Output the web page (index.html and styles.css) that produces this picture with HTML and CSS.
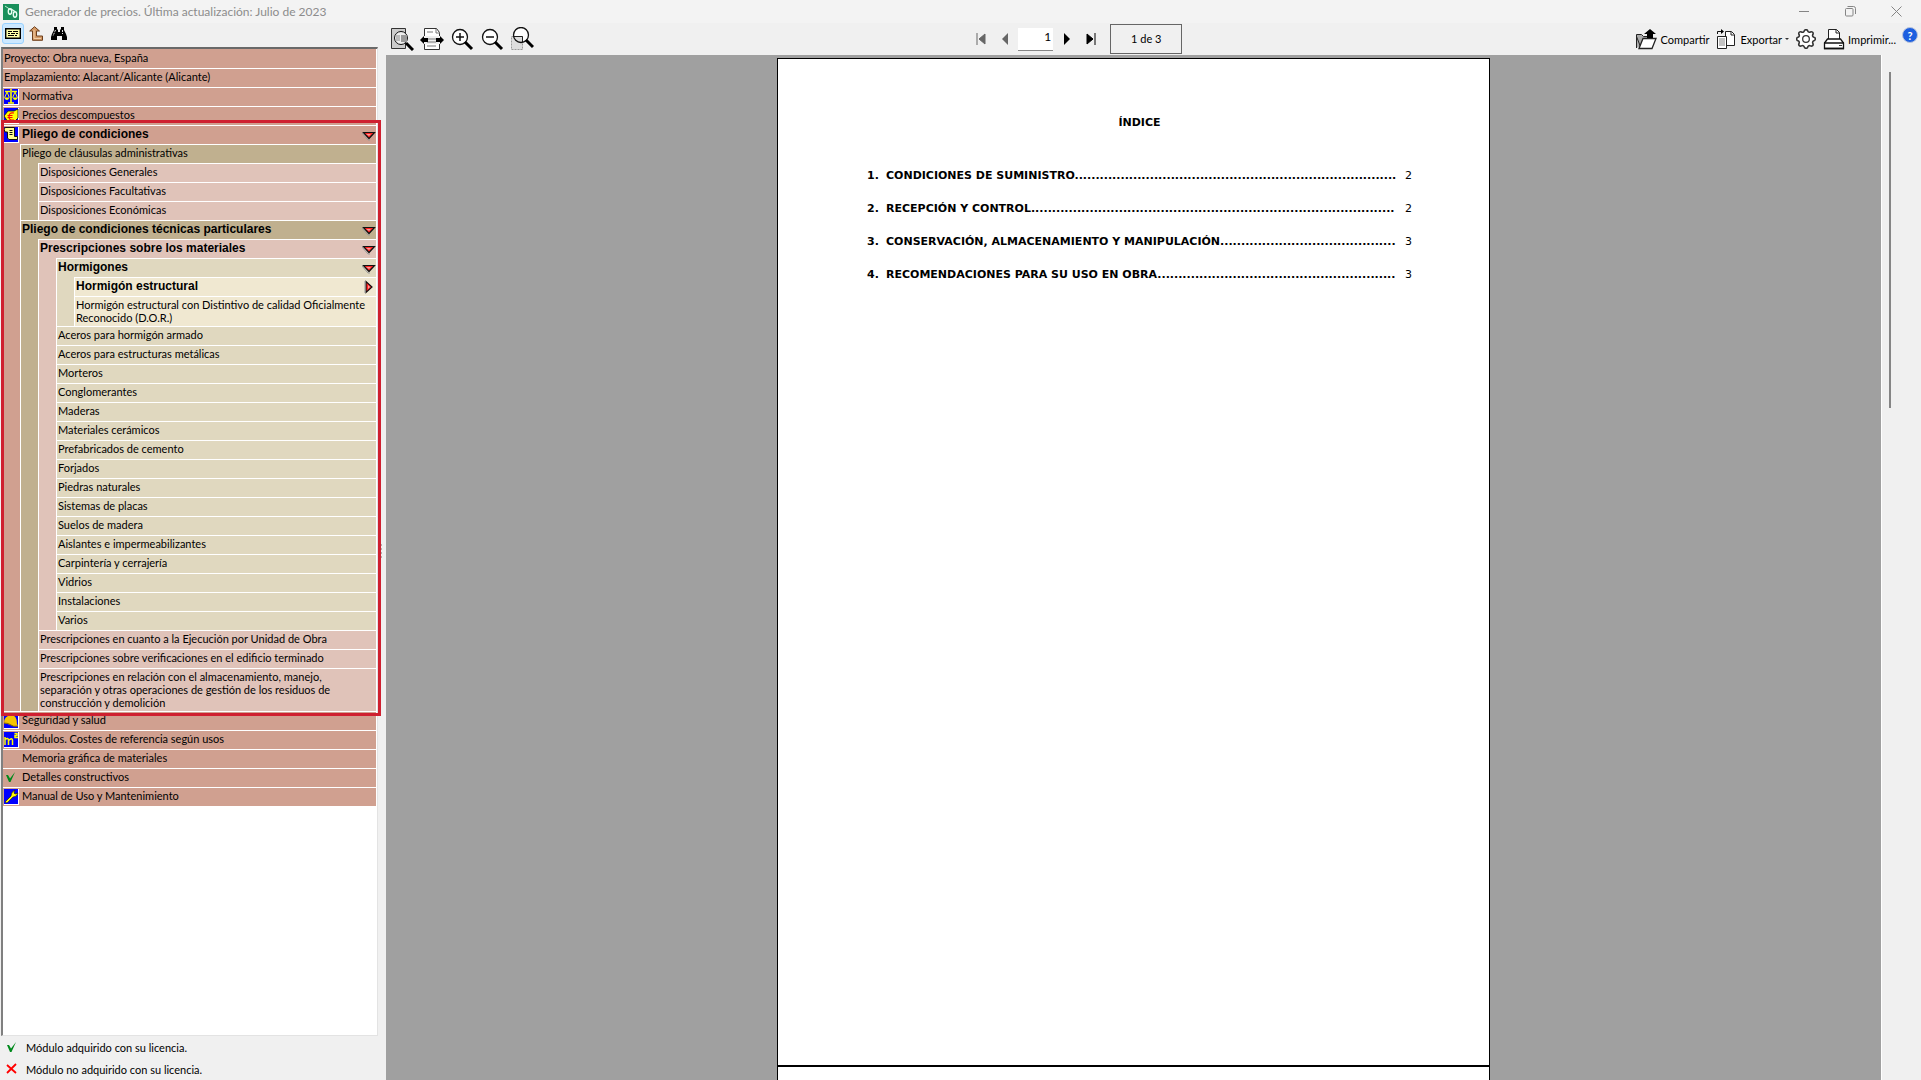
FILE: index.html
```html
<!DOCTYPE html>
<html lang="es">
<head>
<meta charset="utf-8">
<title>Generador de precios</title>
<link rel="stylesheet" href="styles.css">
</head>
<body>
<svg class="defs" aria-hidden="true">
  <symbol id="down" viewBox="0 0 14 10"><path d="M1.500 1.500h11L7 7.500z" fill="#f22" stroke="#111" stroke-width="1.200"/><path d="M4 3h5L7 5z" fill="#f99"/><path d="M0 2 6 9h2" fill="none" stroke="#999"/></symbol>
  <symbol id="right" viewBox="0 0 10 14"><path d="M2 1.500v11L8 7z" fill="#f22" stroke="#111" stroke-width="1.200"/><path d="M4 5v4l2-2z" fill="#f99"/><path d="M1 1v12" stroke="#999"/></symbol>
  <symbol id="check" viewBox="0 0 12 12"><path d="M1 4h2l2 3.500L10 1 5.500 11H4z" fill="#008a1c"/></symbol>
</svg>
<header class="titlebar">
  <svg class="app-icon" viewBox="0 0 16 16"><path d="M0 0h16v16H0z" fill="#198f5b"/><path d="m2 2 6 4" stroke="#bfe8d0"/><g fill="none" stroke="#e8fff2" stroke-width="1.400"><ellipse cx="7" cy="7.500" rx="1.700" ry="2.700"/><ellipse cx="12" cy="10.500" rx="1.700" ry="2.700"/><path d="m8 5 4 2.500"/></g></svg>
  <h1>Generador de precios. Última actualización: Julio de 2023</h1>
  <div class="window-buttons">
    <button aria-label="Minimizar"><svg viewBox="0 0 11 11"><path d="M0 5.500h10"/></svg></button>
    <button aria-label="Restaurar"><svg viewBox="0 0 11 11"><rect x=".5" y="2.500" width="7.500" height="7.500" rx="1"/><path d="M2.500 .5H8.500Q10.500 .5 10.500 2.500V8"/></svg></button>
    <button aria-label="Cerrar"><svg viewBox="0 0 11 11"><path d="m.5.5 10 10m0-10-10 10"/></svg></button>
  </div>
</header>
<div class="workspace">
  <aside class="sidebar">
    <div class="side-tools">
      <button class="active" aria-label="Ficha"><svg width="16" height="11" viewBox="0 0 16 11"><path d="M.7.7h14.600v9.600H.7z" fill="#ffffa8" stroke="#000" stroke-width="1.400"/><path d="M3 3.500h4m1 0h5M3 5.500h2m1 0h4m1 0h2M3 7.500h6m1 0h2" stroke="#000"/></svg></button>
      <button aria-label="Subir"><svg width="14" height="15" viewBox="0 0 14 15"><path d="M5.500.7.700 5H3.500v9.300h10V10H7.500V5h3z" fill="#d49a66" stroke="#6e3f1c"/><path d="M5 4v8.500h7" fill="none" stroke="#f2cda6"/></svg></button>
      <button aria-label="Buscar"><svg width="16" height="14" viewBox="0 0 16 14"><path d="M3 0h3v2l1 1v2h2V3l1-1V0h3v3l2 4 1 3v3h-5V9H6v4H0v-3l1-3 2-4z"/><path d="M4.500 3 2 9m9.500-6v4" stroke="#ddd" stroke-dasharray="2 1"/></svg></button>
    </div>
    <nav class="tree-box">
      <ul class="tree">
        <li><a href="#"><span>Proyecto: Obra nueva, España</span></a></li>
        <li><a href="#"><span>Emplazamiento: Alacant/Alicante (Alicante)</span></a></li>
        <li><a href="#" class="module"><svg class="tile" viewBox="0 0 15 16"><path d="M0 0h14v15H0z" fill="#00f"/><path d="M7 0v14M4 14h6M1 2.500h5m2 0h5" stroke="#ff0" stroke-width="1.600"/><path d="M3 3 .7 8.500M3 3l2.300 5.500M11 3 8.700 8.500M11 3l2.300 5.500" stroke="#ff0"/><path d="M0 8.500h5.500q-2.500 5-5.500 0m8.500 0H14q-3 5-5.500 0" fill="#ff0"/></svg><span>Normativa</span></a></li>
        <li><a href="#" class="module"><svg class="tile" viewBox="0 0 15 16"><path d="M0 0h14v15H0z" fill="#00f"/><path d="m0 8 4-5h6l4-2v9l-4 4H4z" fill="#ff0" stroke="#111" stroke-width=".8"/><path d="M10 5Q5 4 5 8.500T10 12M3.500 7.500h5m-5 2h5" fill="none" stroke="#f00" stroke-width="1.200"/></svg><span>Precios descompuestos</span></a></li>
        <li><a href="#" class="module open"><svg class="tile" viewBox="0 0 15 16"><path d="M0 0h14v15H0z" fill="#00f"/><path d="M0 2q0-1.500 2-1.500h8.500v9h3v3H5L3.500 11V5H1z" fill="#ffff90" stroke="#111"/><path d="M5.500 3.500h3m-3 2h3m-3 2h3" stroke="#111"/></svg><span>Pliego de condiciones</span><svg class="down"><use href="#down"/></svg></a>
          <ul class="lvl-2">
            <li><a href="#"><span>Pliego de cláusulas administrativas</span></a>
              <ul class="lvl-3">
                <li><a href="#"><span>Disposiciones Generales</span></a></li>
                <li><a href="#"><span>Disposiciones Facultativas</span></a></li>
                <li><a href="#"><span>Disposiciones Económicas</span></a></li>
              </ul>
            </li>
            <li><a href="#" class="open"><span>Pliego de condiciones técnicas particulares</span><svg class="down"><use href="#down"/></svg></a>
              <ul class="lvl-3">
                <li><a href="#" class="open"><span>Prescripciones sobre los materiales</span><svg class="down"><use href="#down"/></svg></a>
                  <ul class="lvl-4">
                    <li><a href="#" class="open"><span>Hormigones</span><svg class="down"><use href="#down"/></svg></a>
                      <ul class="lvl-5">
                        <li><a href="#" class="open"><span>Hormigón estructural</span><svg class="right"><use href="#right"/></svg></a></li>
                        <li><a href="#"><span>Hormigón estructural con Distintivo de calidad Oficialmente Reconocido (D.O.R.)</span></a></li>
                      </ul>
                    </li>
                    <li><a href="#"><span>Aceros para hormigón armado</span></a></li>
                    <li><a href="#"><span>Aceros para estructuras metálicas</span></a></li>
                    <li><a href="#"><span>Morteros</span></a></li>
                    <li><a href="#"><span>Conglomerantes</span></a></li>
                    <li><a href="#"><span>Maderas</span></a></li>
                    <li><a href="#"><span>Materiales cerámicos</span></a></li>
                    <li><a href="#"><span>Prefabricados de cemento</span></a></li>
                    <li><a href="#"><span>Forjados</span></a></li>
                    <li><a href="#"><span>Piedras naturales</span></a></li>
                    <li><a href="#"><span>Sistemas de placas</span></a></li>
                    <li><a href="#"><span>Suelos de madera</span></a></li>
                    <li><a href="#"><span>Aislantes e impermeabilizantes</span></a></li>
                    <li><a href="#"><span>Carpintería y cerrajería</span></a></li>
                    <li><a href="#"><span>Vidrios</span></a></li>
                    <li><a href="#"><span>Instalaciones</span></a></li>
                    <li><a href="#"><span>Varios</span></a></li>
                  </ul>
                </li>
                <li><a href="#"><span>Prescripciones en cuanto a la Ejecución por Unidad de Obra</span></a></li>
                <li><a href="#"><span>Prescripciones sobre verificaciones en el edificio terminado</span></a></li>
                <li><a href="#"><span>Prescripciones en relación con el almacenamiento, manejo, separación y otras operaciones de gestión de los residuos de construcción y demolición</span></a></li>
              </ul>
            </li>
          </ul>
          <div class="highlight"></div>
        </li>
        <li><a href="#" class="module"><svg class="tile" viewBox="0 0 15 16"><path d="M0 0h14v15H0z" fill="#00f"/><path d="M0 10Q0 3 7 2q6 0 6 9l1 2q-4 1-7-1z" fill="#f5c400"/><path d="M0 10q5 0 7 2t7 1" fill="none" stroke="#8a6a00"/></svg><span>Seguridad y salud</span></a></li>
        <li><a href="#" class="module"><svg class="tile" viewBox="0 0 15 16"><path d="M0 0h14v15H0z" fill="#00f"/><path d="M1 13V5m0 2.500q3.500-2.500 3.500 1V13m0-4.500q4-3.500 4 0V13M10.500 1.500h2.500v2h-2v2H14" fill="none" stroke="#ff0" stroke-width="1.500"/></svg><span>Módulos. Costes de referencia según usos</span></a></li>
        <li><a href="#" class="module"><i class="tile"></i><span>Memoria gráfica de materiales</span></a></li>
        <li><a href="#" class="module"><svg class="tile bare" viewBox="0 0 15 16"><use href="#check" x="1" y="1" width="12" height="12"/></svg><span>Detalles constructivos</span></a></li>
        <li><a href="#" class="module"><svg class="tile" viewBox="0 0 15 16"><path d="M0 0h14v15H0z" fill="#00f"/><path d="m1 13 6-6q0-4 4-6l-1 3 1 1 3-1q-1 4-5 4l-6 6z" fill="#ff0" stroke="#111" stroke-width=".6"/></svg><span>Manual de Uso y Mantenimiento</span></a></li>
      </ul>
    </nav>
    <ul class="legend">
      <li><svg><use href="#check"/></svg>Módulo adquirido con su licencia.</li>
      <li><svg viewBox="0 0 12 12"><path d="m1 2 9 8M10 1 1 10" stroke="#f00" stroke-width="1.800"/></svg>Módulo no adquirido con su licencia.</li>
    </ul>
    <div class="grip"></div>
  </aside>
  <main class="viewer">
    <div class="toolbar">
      <div class="zoom-tools">
        <button aria-label="Página completa"><svg viewBox="0 0 24 24"><path d="M1.500 1.500h14v20h-14z" fill="#ccc" stroke="#333"/><circle cx="11" cy="11" r="6.500" fill="#eee" stroke="#111"/><path d="M11 8h6v7h-6z" fill="#999"/><path d="M6 9h4m-4 2h4m-4 2h4" stroke="#888"/><path d="m16 16 7 7" stroke="#000" stroke-width="3"/></svg></button>
        <button aria-label="Ancho de página"><svg viewBox="0 0 24 24"><path d="M4.500 9V1.500h12l3 4V9M4.500 17v5.500h15V17" fill="#fff" stroke="#333"/><path d="M16 2v4h4M7 5h6m-6 7h9m-9 3h9m-9 4h9" fill="none" stroke="#777"/><path d="m0 13 4-4v2h4v4H4v2zm24 0-4-4v2h-4v4h4v2z"/></svg></button>
        <button aria-label="Acercar"><svg viewBox="0 0 24 24"><circle cx="10" cy="10" r="7.500" fill="#fff" stroke="#111" stroke-width="1.300"/><path d="M6 10h8M10 6v8" stroke="#111" stroke-width="1.500"/><path d="m15 15 7 7" stroke="#000" stroke-width="3"/></svg></button>
        <button aria-label="Alejar"><svg viewBox="0 0 24 24"><circle cx="10" cy="10" r="7.500" fill="#fff" stroke="#111" stroke-width="1.300"/><path d="M6 10h8" stroke="#111" stroke-width="1.500"/><path d="m15 15 7 7" stroke="#000" stroke-width="3"/></svg></button>
        <button aria-label="Zoom de ventana"><svg viewBox="0 0 24 24"><circle cx="11" cy="8" r="7.500" fill="#fff"/><path d="M1.500 9.500h11v13h-11z" fill="#ddd" stroke="#999" stroke-dasharray="2 1"/><path d="M3.500 9.500h9v5.500" fill="none" stroke="#222"/><circle cx="11" cy="8" r="7.500" fill="none" stroke="#111" stroke-width="1.300"/><path d="m16 13 7 7" stroke="#000" stroke-width="3"/></svg></button>
      </div>
      <div class="pager">
        <button aria-label="Primera página"><svg viewBox="0 0 10 12"><path d="M1 0v12M9 1v10L3 6z" fill="#666" stroke="#666"/></svg></button>
        <button aria-label="Página anterior"><svg viewBox="0 0 10 12"><path d="M8 0v12L2 6z" fill="#666"/></svg></button>
        <input type="text" value="1" aria-label="Página">
        <button aria-label="Página siguiente"><svg viewBox="0 0 10 12"><path d="M2 0v12l6-6z"/></svg></button>
        <button aria-label="Última página"><svg viewBox="0 0 10 12"><path d="M1 1v10l6-5zM9 0v12" stroke="#000"/></svg></button>
        <output>1 de 3</output>
      </div>
      <div class="actions">
        <button><svg viewBox="0 0 22 22"><path d="M1.500 8.500 6 20M1.500 20V6.500h5l2 2h8V12" fill="#aaa" stroke="#222"/><path d="m4 20.500 4-10h13l-4 10z" fill="#fff" stroke="#222" stroke-width="1.300"/><path d="m15 1 6 5h-3v4h-6V6H9z"/></svg>Compartir</button>
        <button><svg viewBox="0 0 22 22"><path d="M10.500 3.500h6l3 3v11h-9z" fill="#fff" stroke="#222"/><path d="M16 4v3h3" fill="none" stroke="#222"/><path d="M2.500 8.500h9v12h-9z" fill="#fff" stroke="#222"/><path d="M4 11h6m-6 2h6m-6 2h6m-6 2h6" stroke="#888"/><path d="M2.500 6V3.500h4" fill="none" stroke="#111"/><path d="M6 1v5l3-2.500z"/></svg>Exportar<i class="caret"></i></button>
        <button aria-label="Configuración" class="gear"><svg viewBox="0 0 24 24" fill="#fff" stroke="#333" stroke-width="1.500"><path d="M10.300 4.300c.4-1.700 2.900-1.700 3.400 0a1.700 1.700 0 0 0 2.500 1c1.600-.9 3.300.8 2.400 2.400a1.700 1.700 0 0 0 1 2.600c1.800.4 1.800 2.900 0 3.400a1.700 1.700 0 0 0-1 2.500c.9 1.600-.8 3.300-2.400 2.400a1.700 1.700 0 0 0-2.500 1c-.5 1.800-3 1.800-3.400 0a1.700 1.700 0 0 0-2.600-1c-1.600.9-3.300-.8-2.400-2.400a1.700 1.700 0 0 0-1-2.500c-1.700-.5-1.700-3 0-3.400a1.700 1.700 0 0 0 1-2.600c-.9-1.600.8-3.300 2.400-2.400a1.700 1.700 0 0 0 2.600-1z" transform="translate(-3 -3) scale(1.250)"/><circle cx="12" cy="12" r="4"/></svg></button>
        <button><svg viewBox="0 0 22 22"><path d="M5.500 12V1.500h8l3 3V12" fill="#fff" stroke="#222"/><path d="M13 1.500V5h3.500" fill="none" stroke="#222"/><path d="m1.500 15 3-4h13l3 4v5.500h-19z" fill="#fff" stroke="#111" stroke-width="1.300"/><path d="M1 15h20M1 20.500h20" stroke="#111" stroke-width="1.500"/><path d="M16 17.500h3" stroke="#333"/></svg>Imprimir...</button>
        <button class="help" aria-label="Ayuda"></button>
      </div>
    </div>
    <div class="stage-row">
      <section class="stage">
        <article class="page">
          <h2>ÍNDICE</h2>
          <ol class="toc">
            <li><b>1.</b><b>CONDICIONES DE SUMINISTRO.............................................................................</b><span>2</span></li>
            <li><b>2.</b><b>RECEPCIÓN Y CONTROL.......................................................................................</b><span>2</span></li>
            <li><b>3.</b><b>CONSERVACIÓN, ALMACENAMIENTO Y MANIPULACIÓN..........................................</b><span>3</span></li>
            <li><b>4.</b><b>RECOMENDACIONES PARA SU USO EN OBRA.........................................................</b><span>3</span></li>
          </ol>
        </article>
        <article class="page"></article>
      </section>
      <div class="scrollbar"><div class="thumb"></div></div>
    </div>
  </main>
</div>
</body>
</html>
```
FILE: styles.css
```css
* { box-sizing: border-box; }
body {
  margin: 0;
  height: 100vh;
  display: flex;
  flex-direction: column;
  overflow: hidden;
  background: #f0f0f0;
  color: #000;
  font: 11px/13px Lato, "Liberation Sans", Arial, sans-serif;
}
ul, ol { list-style: none; margin: 0; padding: 0; }
svg { display: block; flex: none; }
.defs { position: absolute; width: 0; height: 0; }
a { color: inherit; text-decoration: none; }
button {
  display: flex;
  align-items: center;
  justify-content: center;
  padding: 0;
  border: 0;
  background: none;
  color: inherit;
  font: inherit;
}

.titlebar {
  flex: none;
  display: flex;
  align-items: center;
  height: 23px;
  padding-left: 3px;
  background: #f3f3f3;
}
.app-icon { width: 16px; height: 16px; }
h1 {
  margin: 0 0 0 6px;
  font: 12px/16px Lato, sans-serif;
  color: #8c8c8c;
}
.window-buttons { display: flex; margin-left: auto; padding-right: 2px; }
.window-buttons button { width: 46px; height: 20px; }
.window-buttons svg { width: 11px; height: 11px; fill: none; stroke: #858585; }

.workspace { flex: 1; min-height: 0; display: flex; }
.sidebar {
  position: relative;
  flex: none;
  width: 386px;
  display: flex;
  flex-direction: column;
}
.side-tools { display: flex; gap: 1px; height: 24px; padding-left: 2px; }
.side-tools button { width: 22px; height: 21px; border: 1px solid transparent; border-radius: 3px; }
.side-tools .active { background: #cce8ff; border-color: #99d1ff; }

.tree-box {
  flex: 1;
  min-height: 0;
  margin: 0 8px 0 1px;
  border: 1px solid #e3e3e3;
  border-top: 2px solid #696969;
  border-left: 2px solid #808080;
  background: #fff;
}
.tree { --row: #d0a090; padding-bottom: 1px; margin-right: 1px; }
.tree li { position: relative; border-top: 1px solid #fff; background: var(--row); }
.tree > li:first-child { border-top-color: var(--row); }
.tree a {
  display: flex;
  min-height: 18px;
  padding: 1px 1px 2px;
}
.tree a span { flex: 1; padding-right: 4px; }
.tree ul a { background: var(--row); }
.tree .module { padding: 1px 1px 0; }
.tile { width: 15px; height: 16px; margin-right: 3px; }
svg.tile { background: #fff; }
svg.bare { background: none; }
.tree .open {
  padding-right: 0;
  font: bold 12px/13px "Liberation Sans", Arial, sans-serif;
}
.tree .open span { padding: 1px 0 0; }
.tree ul { padding-left: 17px; }
.tree ul > li { border-left: 1px solid #fff; }
.tree ul .open { padding-bottom: 1px; }
.lvl-2 { background: #d0a090; --row: #c0b08f; }
.lvl-3 { background: #c0b08f; --row: #e0c3b9; }
.lvl-4 { background: #e0c3b9; --row: #e0d8bf; }
.lvl-5 { background: #e0d8bf; --row: #f0e8d1; }
.down { width: 14px; height: 10px; margin-top: 4px; }
.right { width: 10px; height: 14px; margin: 1px 2px 0 0; }
.highlight {
  position: absolute;
  inset: -6px -5px -5px -2px;
  border: 3px solid #cf2030;
  pointer-events: none;
  z-index: 1;
}
.legend { padding-left: 6px; }
.legend li { display: flex; align-items: center; height: 22px; }
.legend svg { width: 12px; height: 12px; margin-right: 8px; }
.grip {
  position: absolute;
  right: 4px;
  top: 521px;
  height: 14px;
  border-left: 2px dotted #b0b0b0;
}

.viewer { flex: 1; min-width: 0; display: flex; flex-direction: column; }
.toolbar { flex: none; display: flex; align-items: center; height: 32px; }
.zoom-tools { flex: 0 0 38%; display: flex; gap: 6px; padding-left: 4px; }
.zoom-tools svg { width: 24px; height: 24px; }
.pager { display: flex; align-items: center; }
.pager button { width: 24px; height: 24px; }
.pager svg { width: 10px; height: 12px; }
.pager input {
  width: 35px;
  height: 23px;
  margin: 0 2px 0 1px;
  padding: 0 2px 4px;
  border: 0;
  border-bottom: 1px solid #868686;
  background: #fff;
  font: 12px/16px Lato, "Liberation Sans", sans-serif;
  text-align: right;
}
.pager output {
  width: 72px;
  height: 30px;
  margin-left: 7px;
  border: 1px solid #666;
  line-height: 28px;
  text-align: center;
}
.actions { display: flex; align-items: center; margin: 0 3px 0 auto; gap: 6px; }
.actions svg { width: 22px; height: 22px; margin-right: 3px; }
.actions .gear svg { width: 20px; height: 20px; margin: 0 1px; }
.caret { margin-left: 3px; border: 2px solid transparent; border-top-color: #333; border-bottom: 0; }
.help {
  width: 16px;
  height: 16px;
  margin-bottom: 8px;
  border: 1px solid #b8c4dc;
  border-radius: 50%;
  background: #1d5fe0;
  color: #fff;
  font-weight: bold;
}
.help::before { content: "?"; }

.stage-row { flex: 1; min-height: 0; display: flex; }
.stage {
  flex: 1;
  overflow: hidden;
  padding-top: 3px;
  background: #a0a0a0;
  border-right: 1px solid #fff;
}
.page {
  width: 713px;
  aspect-ratio: 210 / 297;
  margin: 0 auto;
  padding: 57px 77px 0 89px;
  border: 1px solid #000;
  background: #fff;
  font: 11px/14px "DejaVu Sans", sans-serif;
}
.page h2 { margin: 0 0 39px; font: inherit; font-weight: bold; text-align: center; }
.toc { display: flex; flex-direction: column; gap: 19px; }
.toc li { display: flex; }
.toc b:first-child { width: 19px; flex: none; }
.toc b { white-space: nowrap; }
.toc span { margin-left: auto; }
.scrollbar { width: 39px; padding: 17px 0 0 7px; }
.thumb { width: 2px; height: 336px; background: #858585; }
```
